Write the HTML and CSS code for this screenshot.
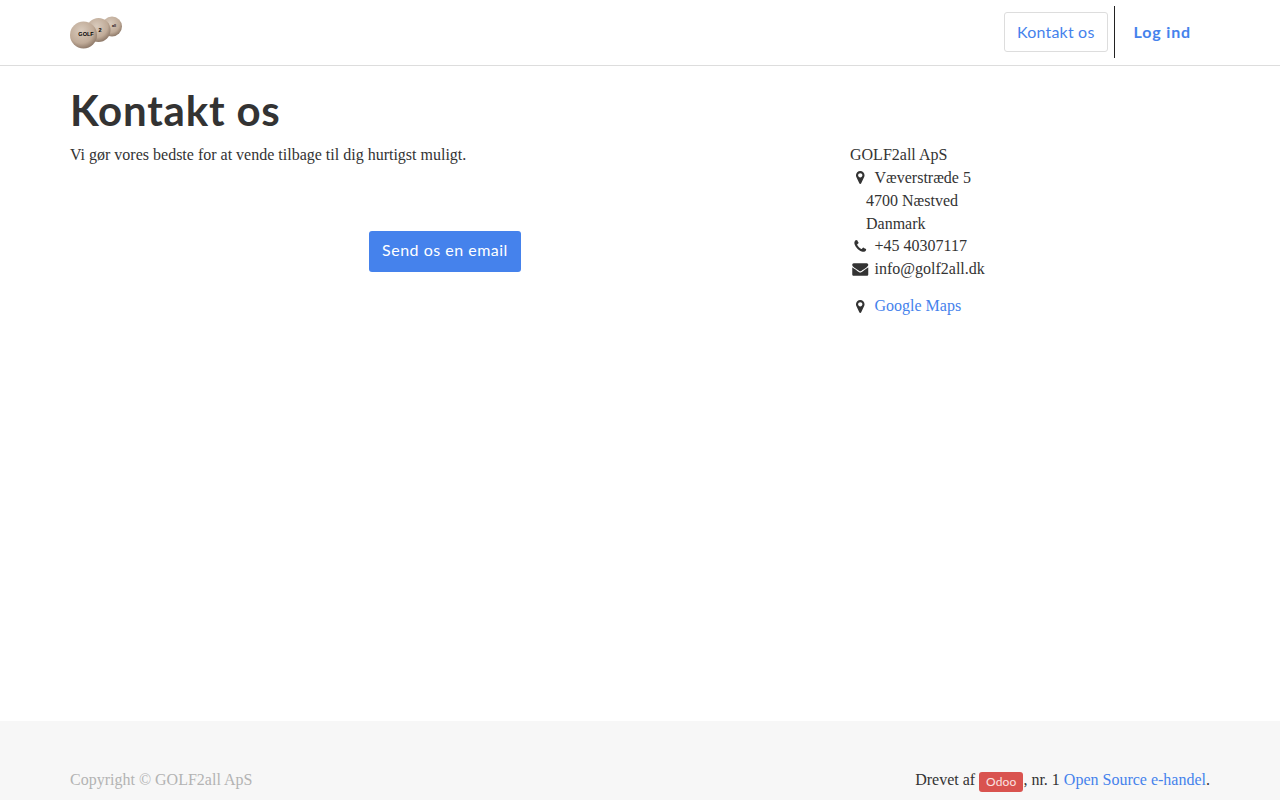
FILE: index.html
```html
<!DOCTYPE html>
<html lang="da">
<head>
<meta charset="utf-8">
<title>Kontakt os</title>
<link rel="stylesheet" href="styles.css">
</head>
<body>
<header class="topbar">
  <div class="container topbar-inner">
    <a class="logo" href="#">
      <svg width="52" height="34" viewBox="0 0 52 34" class="logo-svg">
        <defs>
          <radialGradient id="ball" cx="42%" cy="35%" r="70%">
            <stop offset="0" stop-color="#d9cbbd"/>
            <stop offset="0.65" stop-color="#c0ab98"/>
            <stop offset="1" stop-color="#857060"/>
          </radialGradient>
        </defs>
        <circle cx="42" cy="11.500" r="10" fill="url(#ball)"/>
        <circle cx="28.500" cy="15" r="12" fill="url(#ball)"/>
        <circle cx="13.500" cy="20" r="13.500" fill="url(#ball)"/>
        <text x="16" y="20.800" class="logo-text" text-anchor="middle">GOLF</text>
        <text x="30" y="16.500" class="logo-text" text-anchor="middle">2</text>
        <text x="44" y="12" class="logo-text logo-small" text-anchor="middle">all</text>
      </svg>
    </a>
    <nav class="nav">
      <a class="nav-contact" href="#">Kontakt os</a>
      <span class="nav-divider"></span>
      <a class="nav-login" href="#">Log ind</a>
    </nav>
  </div>
</header>
<main class="main">
  <div class="container">
    <h1 class="title">Kontakt os</h1>
    <div class="columns">
      <div class="col-left">
        <p class="lead">Vi gør vores bedste for at vende tilbage til dig hurtigst muligt.</p>
        <div class="cta">
          <a class="btn" href="#">Send os en email</a>
        </div>
      </div>
      <address class="col-right">
        <div>GOLF2all ApS</div>
        <div class="row">
          <svg class="ico" viewBox="0 0 1792 1792"><path d="M1152 640q0-106-75-181t-181-75-181 75-75 181 75 181 181 75 181-75 75-181zm256 0q0 109-33 179l-364 774q-16 33-47.500 52t-67.500 19-67.500-19-46.500-52l-365-774q-33-70-33-179 0-212 150-362t362-150 362 150 150 362z"/></svg>
          <span>Væverstræde 5</span>
        </div>
        <div class="indent">4700 Næstved</div>
        <div class="indent">Danmark</div>
        <div class="row">
          <svg class="ico" viewBox="0 0 1792 1792"><path d="M1600 1240q0 27-10 70.500t-21 68.500q-21 50-122 106-94 51-186 51-27 0-53-3.500t-57.500-12.500-47-14.500-55.500-20.500-49-18q-98-35-175-83-127-79-264-216t-216-264q-48-77-83-175-3-9-18-49t-20.500-55.500-14.500-47-12.500-57.500-3.500-53q0-92 51-186 56-101 106-122 25-11 68.500-21t70.500-10q14 0 21 3 18 6 53 76 11 19 30 54t35 63.500 31 53.500q3 4 17.500 25t21.500 35.500 7 28.500q0 20-28.500 50t-62 55-62 53-28.500 46q0 9 5 22.500t8.500 20.500 14 24 11.500 19q76 137 174 235t235 174q2 1 19 11.500t24 14 20.500 8.500 22.500 5q18 0 46-28.500t53-62 55-62 50-28.500q14 0 28.500 7t35.500 21.500 25 17.500q25 15 53.500 31t63.500 35 54 30q70 35 76 53 3 7 3 21z"/></svg>
          <span>+45 40307117</span>
        </div>
        <div class="row">
          <svg class="ico ico-wide" viewBox="0 0 1792 1792"><path d="M1792 710v794q0 66-47 113t-113 47h-1472q-66 0-113-47t-47-113v-794q44 49 101 87 362 246 497 345 57 42 92.500 65.500t94.500 48 110 24.500h2q51 0 110-24.500t94.500-48 92.500-65.500q170-123 498-345 57-39 100-87zm0-294q0 79-49 151t-122 123q-376 261-468 325-10 7-42.500 30.500t-54 38-52 32.500-57.500 27-50 9h-2q-23 0-50-9t-57.500-27-52-32.500-54-38-42.500-30.500q-91-64-262-182.500t-205-142.500q-62-42-117-115.500t-55-136.500q0-78 41.500-130t118.500-52h1472q65 0 112.500 45t47.500 115z"/></svg>
          <span>info@golf2all.dk</span>
        </div>
        <div class="row row-map">
          <svg class="ico" viewBox="0 0 1792 1792"><path d="M1152 640q0-106-75-181t-181-75-181 75-75 181 75 181 181 75 181-75 75-181zm256 0q0 109-33 179l-364 774q-16 33-47.500 52t-67.500 19-67.500-19-46.500-52l-365-774q-33-70-33-179 0-212 150-362t362-150 362 150 150 362z"/></svg>
          <a class="link" href="#">Google Maps</a>
        </div>
      </address>
    </div>
  </div>
</main>
<footer class="footer">
  <div class="container footer-inner">
    <span class="copyright">Copyright © GOLF2all ApS</span>
    <span class="powered">Drevet af <a class="badge" href="#">Odoo</a>, nr. 1 <a class="link" href="#">Open Source e-handel</a>.</span>
  </div>
</footer>
</body>
</html>
```
FILE: styles.css
```css
html, body {
  margin: 0;
  padding: 0;
  height: 800px;
  overflow: hidden;
}
body {
  font-family: "Liberation Serif", "Times New Roman", serif;
  font-size: 16px;
  line-height: 22.857px;
  color: #333;
  background: #fff;
}
a { text-decoration: none; }
.container {
  width: 1140px;
  margin: 0 auto;
}
.topbar {
  height: 65px;
  border-bottom: 1px solid #ddd;
}
.topbar-inner {
  height: 65px;
  display: flex;
  align-items: flex-start;
  justify-content: space-between;
}
.logo { display: block; margin-top: 15px; }
.logo-svg { display: block; }
.logo-text {
  font-family: "Liberation Sans", Arial, sans-serif;
  font-size: 5.500px;
  font-weight: 700;
  fill: #000;
}
.logo-small { font-size: 3.500px; }
.nav {
  display: flex;
  align-items: flex-start;
  padding-right: 19px;
  font-family: Lato, "Open Sans", sans-serif;
  font-size: 16px;
}
.nav-contact {
  margin-top: 12px;
  height: 38px;
  line-height: 37px;
  padding: 0 12px;
  border: 1px solid #ddd;
  border-radius: 3px;
  color: #4582ec;
  letter-spacing: 0.200px;
}
.nav-divider {
  width: 1px;
  height: 52px;
  margin: 6px 19px 0 6px;
  background: #222;
}
.nav-login {
  margin-top: 12px;
  line-height: 39px;
  font-weight: 700;
  color: #4582ec;
  letter-spacing: 0.850px;
}
.main {
  box-sizing: border-box;
  height: 655px;
  padding-top: 19px;
}
.title {
  margin: 0;
  font-family: Lato, "Open Sans", sans-serif;
  font-size: 42px;
  line-height: 50px;
  font-weight: 700;
  color: #333;
  letter-spacing: 0.800px;
}
.columns {
  display: flex;
  justify-content: space-between;
  margin-top: 9px;
}
.col-left { width: 750px; }
.col-right {
  width: 360px;
  font-style: normal;
}
.lead { margin: 0; }
.cta {
  margin-top: 64px;
  display: flex;
  justify-content: center;
}
.btn {
  display: block;
  height: 41px;
  line-height: 38px;
  padding: 0 13px;
  background: #4582ec;
  color: #fff;
  border-radius: 3px;
  font-family: Lato, "Open Sans", sans-serif;
  font-size: 16px;
  letter-spacing: 0.500px;
}
.row {
  display: flex;
  align-items: center;
  gap: 4px;
}
.row-map { margin-top: 14px; }
.ico {
  width: 20.500px;
  height: 15px;
  margin-bottom: 1px;
  flex: none;
  fill: #333;
}
.ico-wide { height: 16px; margin-bottom: 2px; }
.indent { padding-left: 16px; }
.link { color: #4582ec; }
.footer {
  height: 79px;
  background: #f7f7f7;
}
.footer-inner {
  display: flex;
  justify-content: space-between;
  padding-top: 48px;
}
.copyright { color: #b3b3b3; }
.badge {
  display: inline-block;
  height: 20px;
  line-height: 20px;
  padding: 0 7px;
  background: #d9534f;
  color: #fbe3e2;
  border-radius: 3px;
  font-family: Lato, "Open Sans", sans-serif;
  font-size: 12px;
  letter-spacing: 0.100px;
  vertical-align: -1px;
}
```
